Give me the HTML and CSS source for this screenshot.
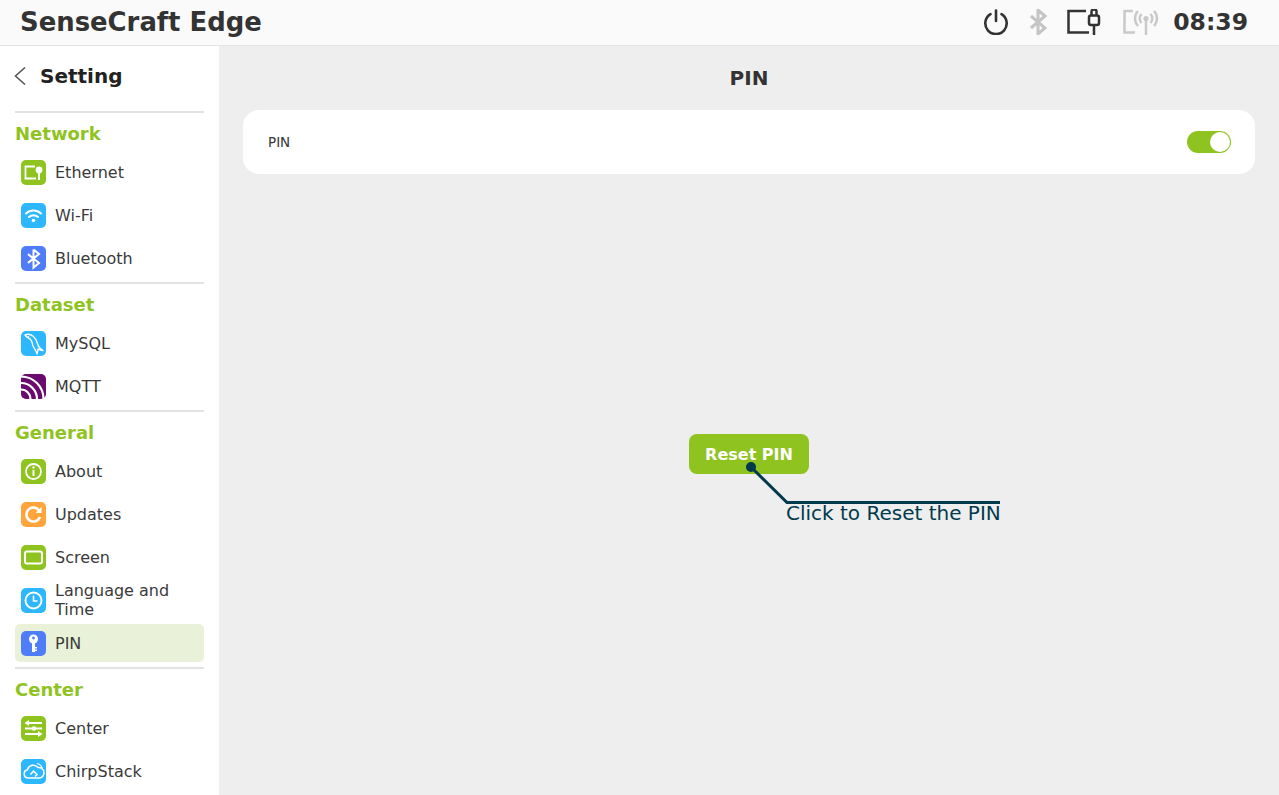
FILE: index.html
```html
<!DOCTYPE html>
<html>
<head>
    <title>SenseCraft Edge</title>
    <meta charset="UTF-8">
    <link rel="stylesheet" href="styles.css">
</head>
<body>
    <header class="topbar">
        <div class="brand">SenseCraft Edge</div>
        <div class="status">
            <svg class="st-power" width="26" height="26" viewBox="0 0 26 26" fill="none" stroke="#333" stroke-width="2.6" stroke-linecap="round"><path d="M13 1.500V12"/><path d="M7.500 5.200a10.700 10.700 0 1 0 11 0"/></svg>
            <svg class="st-bt" width="18" height="26" viewBox="0 0 18 26" fill="none" stroke="#c4c4c4" stroke-width="3"><path d="M9 1v24M2 7l14 12-7 6V1l7 6L2 19"/></svg>
            <svg class="st-eth" width="36" height="26" viewBox="0 0 36 26" fill="none" stroke="#333" stroke-width="2.500"><path d="M20 2H2.500v21.500H23"/><rect x="23" y="6.500" width="10" height="9.500" rx="2"/><path d="M25.500 6.500V2.500a2.500 2 0 0 1 5 0v4M28 16v10"/></svg>
            <svg class="st-net" width="38" height="26" viewBox="0 0 38 26" fill="none" stroke="#c9c9c9" stroke-width="2.500"><path d="M11 2H2.500v21.500H13"/><circle cx="24" cy="9.500" r="2.600" fill="#c9c9c9" stroke="none"/><path d="M24 10v16M19.500 14a6.500 6.500 0 0 1 0-9M28.500 5a6.500 6.500 0 0 1 0 9M16 17a11 11 0 0 1 0-15M32 2a11 11 0 0 1 0 15"/></svg>
            <div class="clock">08:39</div>
        </div>
    </header>

    <div class="layout">
        <aside class="sidebar">
            <div class="side-head">
                <svg width="14" height="20" viewBox="0 0 14 20" fill="none" stroke="#555" stroke-width="1.6"><path d="M12 1.500L2.500 10l9.500 8.500"/></svg>
                <span>Setting</span>
            </div>

            <section class="group">
                <h3>Network</h3>
                <div class="item">
                    <svg class="ico" viewBox="0 0 25 25"><rect width="25" height="25" rx="5" fill="#8fc31f"/><path d="M14 6.500H4.500v12H15" fill="none" stroke="#fff" stroke-width="1.800"/><circle cx="18" cy="10" r="3.400" fill="#fff"/><path d="M18 12v8" stroke="#fff" stroke-width="2"/></svg>
                    <span>Ethernet</span>
                </div>
                <div class="item">
                    <svg class="ico" viewBox="0 0 25 25"><rect width="25" height="25" rx="5" fill="#2cb7ff"/><g fill="none" stroke="#fff" stroke-width="2" stroke-linecap="round"><path d="M5 10.500a11 11 0 0 1 15 0"/><path d="M8 14a6.500 6.500 0 0 1 9 0"/></g><circle cx="12.500" cy="17.500" r="1.800" fill="#fff"/></svg>
                    <span>Wi-Fi</span>
                </div>
                <div class="item">
                    <svg class="ico" viewBox="0 0 25 25"><rect width="25" height="25" rx="5" fill="#4f7cf7"/><path d="M12.500 3.500v18l5.500-4.600-11-8.800M7 16.900l11-8.800-5.500-4.600" fill="none" stroke="#fff" stroke-width="2"/></svg>
                    <span>Bluetooth</span>
                </div>
            </section>

            <section class="group">
                <h3>Dataset</h3>
                <div class="item">
                    <svg class="ico" viewBox="0 0 25 25"><rect width="25" height="25" rx="5" fill="#2cb7ff"/><path d="M4 4c3-1.500 6-.5 8.500 1.500 4 3.500 3.500 8 5.500 10.500 1 1.500 2.500 2.500 4 3.500-2 0-3.500-.5-5-1.500 0 2-.5 3.500-1 5-.5-3-2.500-5-4-8-1-2.500-.5-4.500-2.500-6.500C8.500 7 6 7 4 4z" fill="none" stroke="#fff" stroke-width="1.400" stroke-linejoin="round"/><circle cx="7.500" cy="5.800" r=".7" fill="#fff"/></svg>
                    <span>MySQL</span>
                </div>
                <div class="item">
                    <svg class="ico" viewBox="0 0 25 25"><rect width="25" height="25" rx="5" fill="#6a0a6e"/><g fill="none" stroke="#fff" stroke-width="2.200"><path d="M0 15.500A9.500 9.500 0 0 1 9.500 25"/><path d="M0 9a16 16 0 0 1 16 16"/><path d="M0 2.500A22.500 22.500 0 0 1 22.500 25"/></g></svg>
                    <span>MQTT</span>
                </div>
            </section>

            <section class="group">
                <h3>General</h3>
                <div class="item">
                    <svg class="ico" viewBox="0 0 25 25"><rect width="25" height="25" rx="5" fill="#8fc31f"/><circle cx="12.500" cy="12.500" r="7.500" fill="none" stroke="#fff" stroke-width="1.800"/><path d="M12.500 11v6" stroke="#fff" stroke-width="2"/><circle cx="12.500" cy="8.500" r="1.200" fill="#fff"/></svg>
                    <span>About</span>
                </div>
                <div class="item">
                    <svg class="ico" viewBox="0 0 25 25"><rect width="25" height="25" rx="5" fill="#ffa53b"/><path d="M18.500 9a7 7 0 1 0 .5 6" fill="none" stroke="#fff" stroke-width="2.600"/><path d="M20.500 5v6h-6z" fill="#fff"/></svg>
                    <span>Updates</span>
                </div>
                <div class="item">
                    <svg class="ico" viewBox="0 0 25 25"><rect width="25" height="25" rx="5" fill="#8fc31f"/><rect x="4" y="6.500" width="17" height="12" rx="2" fill="none" stroke="#fff" stroke-width="2"/></svg>
                    <span>Screen</span>
                </div>
                <div class="item two-line">
                    <svg class="ico" viewBox="0 0 25 25"><rect width="25" height="25" rx="5" fill="#2cb7ff"/><circle cx="12.500" cy="12.500" r="8" fill="none" stroke="#fff" stroke-width="2"/><path d="M12.500 7.500v5.500h4" fill="none" stroke="#fff" stroke-width="1.600"/></svg>
                    <span>Language and Time</span>
                </div>
                <div class="item active">
                    <svg class="ico" viewBox="0 0 25 25"><rect width="25" height="25" rx="5" fill="#4f7cf7"/><circle cx="12.500" cy="8" r="4.500" fill="#fff"/><circle cx="12.500" cy="7" r="1.400" fill="#4f7cf7"/><path d="M11 11h3v10h-3zM14 16h2v1.500h-2zM14 18.500h2V20h-2z" fill="#fff"/></svg>
                    <span>PIN</span>
                </div>
            </section>

            <section class="group">
                <h3>Center</h3>
                <div class="item">
                    <svg class="ico" viewBox="0 0 25 25"><rect width="25" height="25" rx="5" fill="#8fc31f"/><g fill="none" stroke="#fff" stroke-width="1.800"><path d="M6 7h15M4 12.500h17M4 18h15"/></g><g fill="#fff"><path d="M3.500 7L8 4v6z"/><circle cx="13" cy="12.500" r="2.200"/><path d="M21.500 18L17 15v6z"/></g></svg>
                    <span>Center</span>
                </div>
                <div class="item">
                    <svg class="ico" viewBox="0 0 25 25"><rect width="25" height="25" rx="5" fill="#2cb7ff"/><path d="M7.500 19a4.200 4.200 0 0 1-1-8.300A6 6 0 0 1 17 8.500a5.300 5.300 0 0 1 1.500 10.500zM9.500 15.500l3-3.500 3.500 3.500-2 2" fill="none" stroke="#fff" stroke-width="1.500"/><path d="M16 4.500a7 7 0 0 1 5.500 6" fill="none" stroke="#fff" stroke-width="1.200"/></svg>
                    <span>ChirpStack</span>
                </div>
            </section>
        </aside>

        <main class="content">
            <h2 class="page-title">PIN</h2>
            <div class="card">
                <span class="card-label">PIN</span>
                <div class="toggle"><div class="knob"></div></div>
            </div>
            <button class="reset-btn">Reset PIN</button>

            <!-- tutorial callout over the button -->
            <svg class="callout-line" width="260" height="50" viewBox="0 0 260 50" fill="none">
                <circle cx="5" cy="5" r="5" fill="#023a4d"/>
                <path d="M5 5l36 35.500h213" stroke="#023a4d" stroke-width="3"/>
            </svg>
            <div class="callout-text">Click to Reset the PIN</div>
        </main>
    </div>
</body>
</html>
```

FILE: styles.css
```css
* { margin: 0; padding: 0; box-sizing: border-box; }
html, body { height: 100%; overflow: hidden; }
body {
    font-family: "DejaVu Sans", sans-serif;
    color: #333;
    background: #eee;
}
.topbar {
    height: 46px;
    background: #fafafa;
    border-bottom: 1px solid #e4e4e4;
    display: flex;
    align-items: center;
    justify-content: space-between;
    padding: 0 31px 1px 20px;
}
.brand {
    font-size: 25.900px;
    font-weight: bold;
    color: #333;
}
.status {
    display: flex;
    align-items: center;
}
.st-power { margin-right: 20px; }
.st-bt { margin-right: 19px; }
.st-eth { margin-right: 20px; }
.st-net { margin-right: 13px; }
.clock {
    font-size: 23.500px;
    font-weight: bold;
    color: #333;
}
.layout {
    display: flex;
    height: 749px;
}
.sidebar {
    width: 219px;
    flex: none;
    background: #fff;
    padding: 0 15px;
    overflow: hidden;
}
.side-head {
    height: 60px;
    margin-bottom: 5px;
    display: flex;
    align-items: center;
    gap: 13px;
    font-size: 20px;
    font-weight: bold;
    color: #222;
}
.side-head svg { margin-left: -2px; }
.group {
    border-top: 2px solid #e2e2e2;
    padding-bottom: 5px;
    display: flex;
    flex-direction: column;
    gap: 5px;
}
.group h3 {
    height: 35px;
    line-height: 41px;
    font-size: 18px;
    font-weight: bold;
    color: #8fc31f;
}
.item {
    height: 38px;
    display: flex;
    align-items: center;
    gap: 9px;
    padding: 1px 0 0 6px;
    border-radius: 5px;
    font-size: 16px;
    line-height: 19px;
    color: #3a3a3a;
}
.item .ico { margin-top: -1px; }
.item.two-line { padding-top: 0; }
.item.two-line .ico { margin-top: 0; }
.item.active { background: #e9f2d8; }
.ico {
    width: 25px;
    height: 25px;
    flex: none;
}
.content {
    flex: 1;
    position: relative;
    padding: 0 24px;
    display: flex;
    flex-direction: column;
    align-items: center;
}
.page-title {
    height: 64px;
    line-height: 64px;
    font-size: 20px;
    font-weight: bold;
    color: #333;
}
.card {
    width: 100%;
    height: 64px;
    background: #fff;
    border-radius: 16px;
    display: flex;
    align-items: center;
    justify-content: space-between;
    padding: 0 24px 0 25px;
}
.card-label {
    font-size: 13.500px;
    color: #333;
}
.toggle {
    width: 44px;
    height: 22px;
    border-radius: 11px;
    background: #8fc31f;
    display: flex;
    align-items: center;
    justify-content: flex-end;
    padding-right: 1px;
}
.knob {
    width: 20px;
    height: 20px;
    border-radius: 50%;
    background: #fff;
}
.reset-btn {
    width: 120px;
    height: 40px;
    margin-top: 260px;
    border: none;
    border-radius: 8px;
    background: #8fc31f;
    color: #fff;
    font-family: inherit;
    font-size: 16px;
    font-weight: bold;
}
.callout-line {
    position: absolute;
    left: 527px;
    top: 416px;
}
.callout-text {
    position: absolute;
    left: 567px;
    top: 454px;
    font-size: 20px;
    line-height: 26px;
    color: #023a4d;
    white-space: nowrap;
}
```
